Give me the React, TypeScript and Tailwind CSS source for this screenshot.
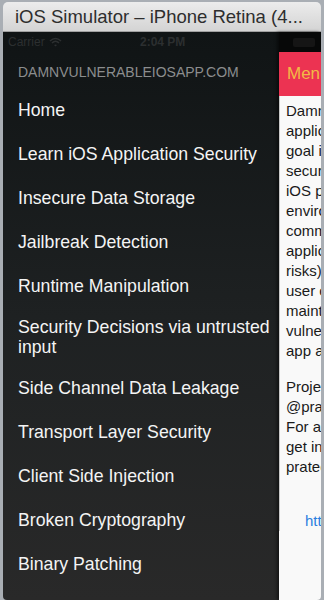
import React from "react";

const menuItems = [
  "Home",
  "Learn iOS Application Security",
  "Insecure Data Storage",
  "Jailbreak Detection",
  "Runtime Manipulation",
  "Security Decisions via untrusted input",
  "Side Channel Data Leakage",
  "Transport Layer Security",
  "Client Side Injection",
  "Broken Cryptography",
  "Binary Patching",
];

const aboutLines = [
  "Damn Vulnerable iOS App (DVIA) is an iOS",
  "application that is damn vulnerable. Its main",
  "goal is to provide a platform to mobile",
  "security enthusiasts/professionals or students",
  "iOS penetration testing skills in a legal",
  "environment. This application covers all the",
  "common vulnerabilities found in iOS",
  "applications (following OWASP top 10 mobile",
  "risks) and contains several challenges that the",
  "user can try. This application will be",
  "maintained regularly to cover the latest",
  "vulnerabilities found in iOS",
  "app applications.",
];

const contactLines = [
  "Project maintained by",
  "@prateekg147",
  "For any questions, feel free to",
  "get in touch with me at",
  "prateek.searchingeye@gmail.com",
];

const StatusBar = () => (
  <div className="absolute left-0 top-0 flex h-[20px] w-full items-center text-[12px] text-[#2c2f30]">
    <div className="flex items-center gap-[4px] pl-[5px]">
      <span>Carrier</span>
      <svg width="13" height="10" viewBox="0 0 13 10">
        <path d="M1 4 Q6.5 -1 12 4" stroke="#2c2f30" strokeWidth="1.6" fill="none" />
        <path d="M3 6 Q6.5 2.5 10 6" stroke="#2c2f30" strokeWidth="1.6" fill="none" />
        <path d="M5 8 L6.5 9.5 L8 8 Q6.5 6.8 5 8 Z" fill="#2c2f30" />
      </svg>
    </div>
    <span className="absolute left-[137px] font-bold">2:04 PM</span>
    <div className="absolute left-[290px] top-[6px] h-[9px] w-[22px] rounded-[2px] bg-[#151515]" />
  </div>
);

export default function App() {
  return (
    <div
      className="h-[600px] w-[324px] overflow-hidden bg-[#a9aeb4] pt-[2px] pl-[3px]"
      style={{ fontFamily: '"Liberation Sans", Arial, sans-serif' }}
    >
      <div className="flex h-[598px] w-[318px] flex-col overflow-hidden rounded-t-[5px] rounded-b-[4px]">
        {/* title bar */}
        <div className="flex h-[30px] items-center whitespace-nowrap bg-gradient-to-b from-[#ececec] to-[#d4d4d4] pl-[12px] text-[18.5px] text-[#2e2e2e] border-b border-[#a0a0a0]">
          iOS Simulator – iPhone Retina (4...
        </div>

        {/* screen */}
        <div className="relative flex flex-1">
          <div className="flex w-[276px] flex-col bg-gradient-to-b from-[#101415] via-[#1e2122] to-[#292929]">
            <div className="h-[20px]" />
            <div className="flex h-[36px] items-center pl-[15px] pt-[4px] text-[14px] text-[#8b8d8e]">
              DAMNVULNERABLEIOSAPP.COM
            </div>
            {menuItems.map((item) => (
              <div
                key={item}
                className="flex min-h-[44px] items-center py-[9px] pl-[15px] pr-[6px] text-[17.7px] leading-[20px] text-[#f4f4f4]"
              >
                {item}
              </div>
            ))}
          </div>

          <div className="flex w-[42px] flex-col overflow-hidden bg-[#f9f9f9] shadow-[-2px_0_3px_rgba(0,0,0,0.5)]">
            <div className="h-[20px] bg-[#070808]" />
            <div className="flex h-[44px] items-center whitespace-nowrap bg-[#ec3352] pl-[8px] text-[17px] text-[#f2b945]">
              Menu
            </div>
            <div className="w-[300px] border-l border-[#c8c8c8] pl-[6px] pt-[5px] text-[15px] leading-[20px] text-[#1a1a1a]">
              {aboutLines.map((l) => (
                <div key={l} className="whitespace-nowrap">{l}</div>
              ))}
              <div className="mt-[16px]">
                {contactLines.map((l) => (
                  <div key={l} className="whitespace-nowrap">{l}</div>
                ))}
              </div>
              <div className="mt-[34px] whitespace-nowrap pl-[19px] text-[#2b7fe0]">
                http://damnvulnerableiosapp.com
              </div>
            </div>
          </div>

          <StatusBar />
        </div>
      </div>
    </div>
  );
}
